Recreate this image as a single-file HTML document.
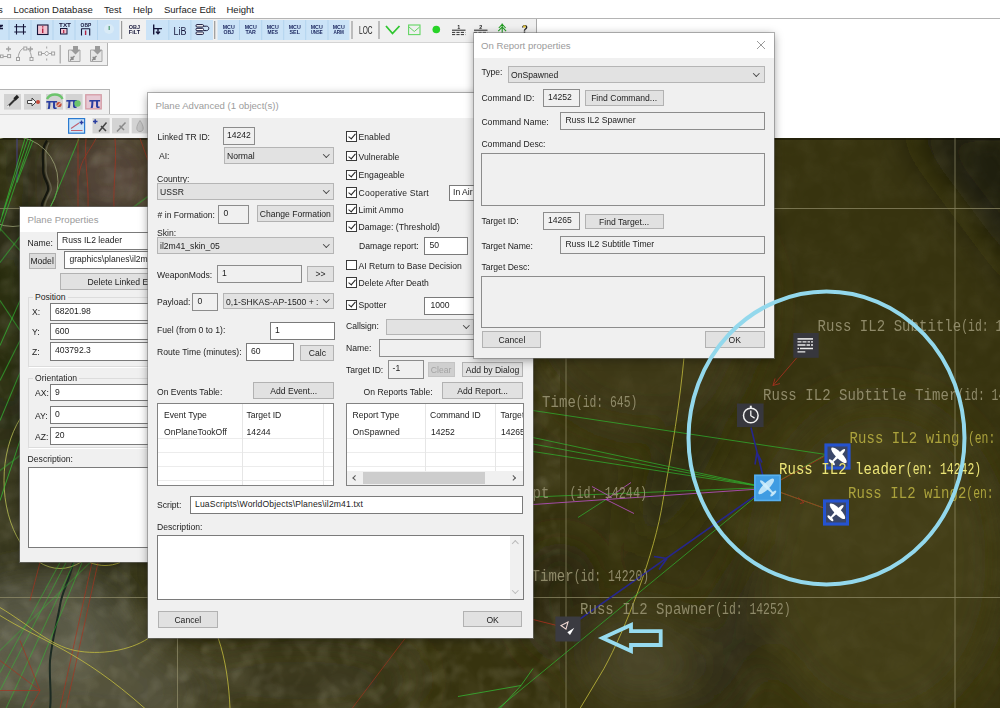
<!DOCTYPE html>
<html><head><meta charset="utf-8"><title>Mission Editor</title>
<style>
*{box-sizing:border-box;margin:0;padding:0}
html,body{width:1000px;height:708px;overflow:hidden;background:#fff}
body{position:relative;font-family:"Liberation Sans",sans-serif;font-size:8.6px;color:#1c1c1c}
div,span,i{position:absolute}
#menu span{top:3.7px;font-size:9.5px;white-space:nowrap;color:#222;line-height:12px}
.tb{background:#f0f0f0}
.bb{background:#cce4f7;top:19.5px;height:21px;width:22px;border-left:1px solid #b9d7ee}
.gb{background:#d3d3d3;width:17px;height:16px}
.dlg{background:#f0f0f0;box-shadow:0 0 0 1px rgba(120,120,120,.55),0 2px 9px rgba(0,0,0,.4)}
.dlg .title{left:0;top:0;right:0;height:25px;background:#fff;color:#9c9c9c;font-size:9.6px;line-height:25px;padding-left:7.5px;white-space:nowrap}
.l{white-space:nowrap;line-height:13px;height:13px}
.in{background:#fff;border:1px solid #7a7a7a;white-space:nowrap;overflow:hidden}
.ro{background:#f0f0f0;border:1px solid #8c8c8c;white-space:nowrap;overflow:hidden}
.btn{background:#e1e1e1;border:1px solid #b2b2b2;text-align:center;white-space:nowrap;overflow:hidden}
.btn.dis{background:#cfcfcf;border-color:#c4c4c4;color:#a3a3a3}
.sel{background:#e2e2e2;border:1px solid #b5b5b5;padding-left:2px;white-space:nowrap;overflow:hidden}
.sel i{right:5px;top:50%;margin-top:-4px;width:4.6px;height:4.6px;border-right:1px solid #444;border-bottom:1px solid #444;transform:rotate(45deg)}
.cb{width:10.6px;height:10.6px;background:#fff;border:1px solid #3a3a3a}
.cb.on:after{content:"";position:absolute;left:2.6px;top:-0.2px;width:3px;height:6.2px;border-right:1.1px solid #222;border-bottom:1.1px solid #222;transform:rotate(40deg)}
.tbl{background:#fff;border:1px solid #828282;overflow:hidden}
.tbl .l{color:#222}
.hl{left:0;right:0;height:1px;background:#ececec}
.vl{top:0;bottom:0;width:1px;background:#e6e6e6}
</style></head><body>
<div id="map" style="left:0;top:137.5px;width:1000px;height:570.5px;background:#3c3718;overflow:hidden"><svg width="1000" height="570.5" viewBox="0 137.5 1000 570.5" style="position:absolute;left:0;top:0"><defs>
<filter id="bl" x="-20%" y="-20%" width="140%" height="140%"><feGaussianBlur stdDeviation="22"/></filter>
<filter id="bs" x="-20%" y="-20%" width="140%" height="140%"><feGaussianBlur stdDeviation="9"/></filter>
<filter id="nz" x="0" y="0" width="100%" height="100%"><feTurbulence type="fractalNoise" baseFrequency="0.035" numOctaves="3" seed="7"/><feColorMatrix values="0 0 0 0 0.1  0 0 0 0 0.09  0 0 0 0 0.03  0.55 0.55 0 0 -0.5"/></filter>
<filter id="nz2" x="0" y="0" width="100%" height="100%"><feTurbulence type="fractalNoise" baseFrequency="0.02" numOctaves="2" seed="3"/><feColorMatrix values="0 0 0 0 0.55  0 0 0 0 0.52  0 0 0 0 0.38  0.7 0.7 0 0 -0.62"/></filter>
<filter id="nz3" x="0" y="0" width="100%" height="100%"><feTurbulence type="fractalNoise" baseFrequency="0.06" numOctaves="2" seed="11"/><feColorMatrix values="0 0 0 0 0.62  0 0 0 0 0.6  0 0 0 0 0.46  0.8 0.8 0 0 -0.72"/></filter>
</defs>
<rect x="0" y="137" width="1000" height="571" fill="#37330f"/>
<g filter="url(#bl)">
<rect x="-40" y="120" width="190" height="620" fill="#36361f"/>
<ellipse cx="112" cy="175" rx="55" ry="45" fill="#54453a"/>
<ellipse cx="40" cy="650" rx="95" ry="65" fill="#5c5b48"/>
<ellipse cx="130" cy="690" rx="90" ry="45" fill="#55533c"/>
<ellipse cx="10" cy="330" rx="30" ry="120" fill="#232611"/>
<ellipse cx="18" cy="172" rx="38" ry="45" fill="#25280f"/>
<path d="M905 120L1040 120L1040 300Z" fill="#1c1a0a"/>
<ellipse cx="690" cy="440" rx="26" ry="110" transform="rotate(25 690 440)" fill="#2c2910"/>
<ellipse cx="740" cy="630" rx="30" ry="110" transform="rotate(25 740 630)" fill="#2f2b12"/>
<ellipse cx="640" cy="660" rx="55" ry="45" fill="#4a4428"/>
<ellipse cx="880" cy="560" rx="120" ry="160" fill="#423d15"/>
<ellipse cx="560" cy="600" rx="40" ry="60" fill="#2b2811"/>
<ellipse cx="640" cy="300" rx="120" ry="130" fill="#3d3813"/>
<ellipse cx="300" cy="680" rx="120" ry="40" fill="#3a371c"/>
</g>
<rect x="0" y="137" width="1000" height="571" filter="url(#nz)" opacity=".6"/>
<rect x="0" y="137" width="1000" height="571" filter="url(#nz2)" opacity=".07"/>
<rect x="0" y="137" width="560" height="571" filter="url(#nz2)" opacity=".18"/>
<rect x="0" y="137" width="1000" height="571" filter="url(#nz3)" opacity=".05"/>
<rect x="0" y="137" width="560" height="571" filter="url(#nz3)" opacity=".25"/>
<rect x="0" y="137" width="1000" height="2.5" fill="#000" opacity=".35"/>
<g stroke="#96926e" stroke-width=".9" opacity=".75"><path d="M177.5 137V708M566 137V708M955 137V708M0 208H1000M0 597H1000"/></g>
<g fill="none" stroke-width=".9">
<path d="M47 140 C40 150 44 160 43 168 C42 178 50 183 48 190 C45 198 40 203 42 210" stroke="#15170f" stroke-width="2.2"/>
<path d="M49 142 C43 152 47 160 46 168 C45 178 53 183 51 190 C48 198 43 203 45 210" stroke="#77755f" stroke-width="1.4" opacity=".6"/>
<path d="M73 562 C70 580 62 590 60 605 C57 622 52 640 50 660 C49 680 52 695 50 708" stroke="#1c2a22" stroke-width="2"/>
<circle cx="13" cy="181" r="45" stroke="#a5ab7d" stroke-width=".9" opacity=".8"/>
<ellipse cx="60" cy="480" rx="56" ry="88" stroke="#b9bf55" stroke-width="1" opacity=".8"/>
<path d="M17 138V182" stroke="#4a47b0" opacity=".8"/>
<g stroke="#34c236" opacity=".85"><path d="M25 138L2 215M28 138L0 222M31 138L-2 236M33 140L17 182M79 138L50 208M148 196L126 212M0 228L20 250M0 262L20 236M0 300L20 330M0 345L20 300M0 380L20 340M0 420L20 372M0 470L20 455M0 500L20 440"/>
<path d="M60 562L0 672M66 562L0 690M74 562L6 708M82 562L22 708M90 562L0 650" opacity=".75"/></g>
<g stroke="#a8321f" opacity=".75"><path d="M78 138V208M86 138C84 160 89 180 88 208M96 138C90 150 80 160 79 175M115 138C117 160 113 185 114 208M140 138L148 160"/>
<path d="M92 562L60 708M98 562L66 708M40 562L30 600M20 640L40 690L0 660M0 690L40 690M30 708L40 690"/></g>
<g stroke="#c9c23f" opacity=".85"><path d="M0 607C30 625 50 645 75 650C100 655 130 650 148 638M0 615C40 640 80 650 145 708M218 637C226 660 229 685 230 708M90 562C100 566 110 566 120 562"/>
<path d="M684 357C680 400 672 450 663 500C655 553 625 630 604 668L580 708"/></g>
<path d="M405 638L352 708" stroke="#a8321f" opacity=".7"/><path d="M458 696L521 685L533 668M521 685L500 708" stroke="#34c236" opacity=".8"/>
</g>
<g fill="none" stroke-width=".85">
<path d="M533 410L826 454M533 437L767 487M533 443.5L767 487M533 451L767 487M533 496.5L767 487M767 487L828 509M767 487L826 454M767 487L498 708M578 517L606 499" stroke="#2fbf32" opacity=".78"/>
<path d="M533 504L767 488M606 499L631 482M606 499L634 513M592 486L612 497" stroke="#b64fc0"/>
<path d="M797 357L773 385M773 385L775 378M773 385L780 383M767 487L828 509M798 497L804 502M800 503L804 502M533 619L557 625M767 487L826 455" stroke="#a6301f"/>
<path d="M751 427L766 488M757 452L755 464M757 452L762 462M575 622L767 487M667 558L654 556M667 558L659 569" stroke="#26268c" stroke-width="1.6"/>
</g>
<rect x="793.3" y="332" width="25.40000000000009" height="25.30000000000001" fill="#37373d"/>
<g stroke="#ececec" stroke-width="1.3"><path d="M797.5 338.4H813" stroke-width="1.6"/><path d="M797.5 341.3H801.5M802.5 341.3H806.5M807.5 341.3H810M811 341.3H813M797.5 344.5H805.5M806.5 344.5H810M811 344.5H813M797.5 348H799M800 348H813M797.5 351.4H805.3"/></g>
<rect x="737" y="403" width="26.600000000000023" height="23.600000000000023" fill="#37373d"/>
<g fill="none" stroke="#f2f2f2" stroke-width="1.5"><circle cx="750.8" cy="415" r="7.3"/><path d="M750.8 410V415.2L754.6 417.6" stroke-width="1.3"/><path d="M750.8 407.6V405.2" stroke-width="2"/></g>
<rect x="754" y="474" width="27" height="26.8" fill="#3f9ce2"/><rect x="755" y="475" width="25" height="24.8" fill="none" stroke="#58b0ee" stroke-width="1.4"/>
<g transform="translate(767.5,487.2) rotate(-45)" fill="#d4f0fb" fill-opacity="0.85"><ellipse cx="0" cy="-1.8" rx="10.6" ry="3.2"/><path d="M0 -10.2C1.6 -10.2 1.9 -5 1.5 0L0.7 8.5H-0.7L-1.5 0C-1.9 -5 -1.6 -10.2 0 -10.2Z"/><ellipse cx="0" cy="8.2" rx="3.9" ry="1.4"/></g>
<rect x="824.5" y="443" width="26" height="26" fill="#3a4668"/><rect x="826.0" y="444.5" width="23" height="23" fill="none" stroke="#2553cf" stroke-width="3"/>
<g transform="translate(837.7,456) rotate(45)" fill="#fff" fill-opacity="1"><ellipse cx="0" cy="-1.8" rx="10.6" ry="3.2"/><path d="M0 -10.2C1.6 -10.2 1.9 -5 1.5 0L0.7 8.5H-0.7L-1.5 0C-1.9 -5 -1.6 -10.2 0 -10.2Z"/><ellipse cx="0" cy="8.2" rx="3.9" ry="1.4"/></g>
<rect x="823" y="499" width="26" height="26" fill="#3a4668"/><rect x="824.5" y="500.5" width="23" height="23" fill="none" stroke="#2553cf" stroke-width="3"/>
<g transform="translate(836.2,512) rotate(45)" fill="#fff" fill-opacity="1"><ellipse cx="0" cy="-1.8" rx="10.6" ry="3.2"/><path d="M0 -10.2C1.6 -10.2 1.9 -5 1.5 0L0.7 8.5H-0.7L-1.5 0C-1.9 -5 -1.6 -10.2 0 -10.2Z"/><ellipse cx="0" cy="8.2" rx="3.9" ry="1.4"/></g>
<rect x="555.4" y="616" width="25.200000000000045" height="25" fill="#3b3b41"/>
<path d="M568 621.6L561 625L566 628.6Z" fill="none" stroke="#f0d8d2" stroke-width="1.1"/><path d="M574.3 627.2L567.3 631.7L570 634.5Z" fill="#fff"/>
<g font-family="Liberation Mono, monospace" font-size="14px" style="white-space:pre">
<g transform="translate(0,406) scale(1,1.17)" fill="#8f8a69" fill-opacity="1"><text xml:space="preserve" x="542" y="0" textLength="33.8" lengthAdjust="spacing">Time</text><text x="575.8" y="0" textLength="61.6" lengthAdjust="spacingAndGlyphs">(id: 645)</text></g>
<g transform="translate(0,497) scale(1,1.17)" fill="#8f8a69" fill-opacity="1"><text xml:space="preserve" x="524" y="0" textLength="25.3" lengthAdjust="spacing">ypt</text></g>
<g transform="translate(0,497) scale(1,1.17)" fill="#8f8a69" fill-opacity="1"><text x="569.5" y="0" textLength="77.5" lengthAdjust="spacingAndGlyphs">(id: 14244)</text></g>
<g transform="translate(0,580) scale(1,1.17)" fill="#8f8a69" fill-opacity="1"><text xml:space="preserve" x="531.5" y="0" textLength="42.2" lengthAdjust="spacing">Timer</text><text x="573.8" y="0" textLength="75.3" lengthAdjust="spacingAndGlyphs">(id: 14220)</text></g>
<g transform="translate(0,613.6) scale(1,1.17)" fill="#8f8a69" fill-opacity="1"><text xml:space="preserve" x="580" y="0" textLength="135.2" lengthAdjust="spacing">Russ IL2 Spawner</text><text x="715.2" y="0" textLength="75.3" lengthAdjust="spacingAndGlyphs">(id: 14252)</text></g>
<g transform="translate(0,330) scale(1,1.17)" fill="#8f8a69" fill-opacity="1"><text xml:space="preserve" x="817.6" y="0" textLength="143.6" lengthAdjust="spacing">Russ IL2 Subtitle</text><text x="961.2" y="0" textLength="75.3" lengthAdjust="spacingAndGlyphs">(id: 14265)</text></g>
<g transform="translate(0,399.4) scale(1,1.17)" fill="#8f8a69" fill-opacity="1"><text xml:space="preserve" x="763" y="0" textLength="194.3" lengthAdjust="spacing">Russ IL2 Subtitle Timer</text><text x="957.4" y="0" textLength="75.3" lengthAdjust="spacingAndGlyphs">(id: 14265)</text></g>
<g transform="translate(0,442.6) scale(1,1.17)" fill="#aba23c" fill-opacity="1"><text xml:space="preserve" x="849.6" y="0" textLength="118.3" lengthAdjust="spacing">Russ IL2 wing </text><text x="967.9" y="0" textLength="75.3" lengthAdjust="spacingAndGlyphs">(en: 14250)</text></g>
<g transform="translate(0,473) scale(1,1.17)" fill="#ebe476" fill-opacity="1"><text xml:space="preserve" x="779" y="0" textLength="126.7" lengthAdjust="spacing">Russ IL2 leader</text><text x="905.8" y="0" textLength="75.3" lengthAdjust="spacingAndGlyphs">(en: 14242)</text></g>
<g transform="translate(0,497) scale(1,1.17)" fill="#aba23c" fill-opacity="1"><text xml:space="preserve" x="848" y="0" textLength="118.3" lengthAdjust="spacing">Russ IL2 wing2</text><text x="966.3" y="0" textLength="75.3" lengthAdjust="spacingAndGlyphs">(en: 14258)</text></g>
</g></svg></div>
<div id="menu" style="left:0;top:0;width:1000px;height:19px;background:#fff;border-bottom:1px solid #b4b4b4">
<span style="left:-2px">s</span><span style="left:13.5px">Location Database</span><span style="left:104px">Test</span><span style="left:133px">Help</span><span style="left:164px">Surface Edit</span><span style="left:226.5px">Height</span>
</div>
<div style="left:0;top:19px;width:1000px;height:118.5px;background:#fff"></div>
<div class="tb" style="left:0;top:19px;width:537px;height:23.5px;border-right:1px solid #a8a8a8;border-bottom:1px solid #d4d4d4"></div>
<div class="tb" style="left:0;top:42.5px;width:108px;height:23px;border-right:1px solid #b4b4b4;border-bottom:1px solid #b4b4b4"></div>
<div class="tb" style="left:0;top:89px;width:110px;height:25px;border-top:1px solid #b4b4b4;border-right:1px solid #b4b4b4"></div>
<div class="tb" style="left:0;top:114px;width:160px;height:23.5px;background:#f3f3f3;border-top:1px solid #d4d4d4"></div>
<svg width="1000" height="140" viewBox="0 0 1000 140" style="position:absolute;left:0;top:0" font-family="Liberation Sans, sans-serif">
<rect x="0" y="20" width="119.5" height="20" fill="#cbe3f7"/><rect x="8.5" y="20" width="1" height="20" fill="#b4d4ee"/><rect x="30.5" y="20" width="1" height="20" fill="#b4d4ee"/><rect x="52.5" y="20" width="1" height="20" fill="#b4d4ee"/><rect x="74.5" y="20" width="1" height="20" fill="#b4d4ee"/><rect x="97.0" y="20" width="1" height="20" fill="#b4d4ee"/>
<rect x="146" y="20" width="67" height="20" fill="#cbe3f7"/><rect x="168.3" y="20" width="1" height="20" fill="#b4d4ee"/><rect x="190.4" y="20" width="1" height="20" fill="#b4d4ee"/>
<rect x="217.5" y="20" width="132.0" height="20" fill="#cbe3f7"/><rect x="239.0" y="20" width="1" height="20" fill="#b4d4ee"/><rect x="261.2" y="20" width="1" height="20" fill="#b4d4ee"/><rect x="283.2" y="20" width="1" height="20" fill="#b4d4ee"/><rect x="305.2" y="20" width="1" height="20" fill="#b4d4ee"/><rect x="327.5" y="20" width="1" height="20" fill="#b4d4ee"/>
<rect x="121.0" y="21" width="1.2" height="18" fill="#9a9a9a"/>
<rect x="214.1" y="21" width="1.2" height="18" fill="#9a9a9a"/>
<rect x="351.4" y="21" width="1.2" height="18" fill="#9a9a9a"/>
<rect x="378.4" y="21" width="1.2" height="18" fill="#9a9a9a"/>
<path d="M0 25.5H3M0 28.5H3M0 27L3 25.5" stroke="#16163a" stroke-width="1.3" fill="none"/>
<path d="M16.5 24V34.5M23.5 24V34.5M14.3 26.7H26M14.3 32H26" stroke="#16163a" stroke-width="1.1" fill="none"/>
<rect x="37.5" y="25" width="10.5" height="9.5" fill="#f1c4d2" stroke="#16163a" stroke-width="1.1"/><path d="M42.7 28.5V33M42.7 26.2V27.4" stroke="#b02040" stroke-width="1.4"/>
<text x="59" y="26.6" font-size="4.6" font-weight="bold" fill="#16163a" textLength="12" lengthAdjust="spacingAndGlyphs">TXT</text>
<rect x="60.5" y="28.5" width="6.5" height="5.5" fill="#f1c4d2" stroke="#16163a" stroke-width="1"/><path d="M63.7 30V33" stroke="#b02040" stroke-width="1.2"/>
<text x="80.6" y="26.6" font-size="4.6" font-weight="bold" fill="#16163a" textLength="10.6" lengthAdjust="spacingAndGlyphs">OBP</text>
<path d="M81.5 28.5V35.5M89.7 28.5V35.5M81.5 28.8H89.7" stroke="#16163a" stroke-width="1.1" fill="none"/><path d="M85.6 30.5V35" stroke="#b02040" stroke-width="1.4"/>
<circle cx="109" cy="29" r="5" fill="#dcecf6" opacity=".8"/><path d="M109.2 26V30" stroke="#4a9a6a" stroke-width="1.2"/>
<text x="128.8" y="29" font-size="5.2" font-weight="bold" fill="#16163a" textLength="11.2" lengthAdjust="spacingAndGlyphs">OBJ</text>
<text x="128.8" y="34.3" font-size="5.2" font-weight="bold" fill="#16163a" textLength="11.2" lengthAdjust="spacingAndGlyphs">FiLT</text>
<path d="M153.7 24.5V34.5M153.7 28.6H162M158 28.6V33.6M156 31.6L158 33.8L160 31.6" stroke="#16163a" stroke-width="1.4" fill="none"/>
<text x="173.6" y="34.6" font-size="11.6" fill="#16163a" textLength="13" lengthAdjust="spacingAndGlyphs" style="font-stretch:condensed">LiB</text>
<g fill="#fff" stroke="#16163a" stroke-width="1"><rect x="196" y="24.6" width="7.5" height="2.4" rx="1"/><rect x="196" y="28.3" width="7.5" height="2.4" rx="1"/><rect x="196" y="32" width="7.5" height="2.4" rx="1"/><path d="M203.5 26.2H206.5C209.5 26.2 209.5 30.6 206.5 30.6H203.5" fill="none"/></g>
<text x="228.7" y="28.8" font-size="5" font-weight="bold" fill="#1f2b63" text-anchor="middle" textLength="12" lengthAdjust="spacingAndGlyphs">MCU</text>
<text x="228.7" y="34.3" font-size="5" font-weight="bold" fill="#1f2b63" text-anchor="middle" textLength="10.5" lengthAdjust="spacingAndGlyphs">OBJ</text>
<text x="250.7" y="28.8" font-size="5" font-weight="bold" fill="#1f2b63" text-anchor="middle" textLength="12" lengthAdjust="spacingAndGlyphs">MCU</text>
<text x="250.7" y="34.3" font-size="5" font-weight="bold" fill="#1f2b63" text-anchor="middle" textLength="10.5" lengthAdjust="spacingAndGlyphs">TAR</text>
<text x="272.7" y="28.8" font-size="5" font-weight="bold" fill="#1f2b63" text-anchor="middle" textLength="12" lengthAdjust="spacingAndGlyphs">MCU</text>
<text x="272.7" y="34.3" font-size="5" font-weight="bold" fill="#1f2b63" text-anchor="middle" textLength="10.5" lengthAdjust="spacingAndGlyphs">MES</text>
<text x="294.7" y="28.8" font-size="5" font-weight="bold" fill="#1f2b63" text-anchor="middle" textLength="12" lengthAdjust="spacingAndGlyphs">MCU</text>
<text x="294.7" y="34.3" font-size="5" font-weight="bold" fill="#1f2b63" text-anchor="middle" textLength="10.5" lengthAdjust="spacingAndGlyphs">SEL</text>
<text x="316.7" y="28.8" font-size="5" font-weight="bold" fill="#1f2b63" text-anchor="middle" textLength="12" lengthAdjust="spacingAndGlyphs">MCU</text>
<text x="316.7" y="34.3" font-size="5" font-weight="bold" fill="#1f2b63" text-anchor="middle" textLength="12" lengthAdjust="spacingAndGlyphs">UNSE</text>
<text x="338.7" y="28.8" font-size="5" font-weight="bold" fill="#1f2b63" text-anchor="middle" textLength="12" lengthAdjust="spacingAndGlyphs">MCU</text>
<text x="338.7" y="34.3" font-size="5" font-weight="bold" fill="#1f2b63" text-anchor="middle" textLength="10.5" lengthAdjust="spacingAndGlyphs">ARM</text>
<text x="359" y="34" font-size="10.5" fill="#222" textLength="13.5" lengthAdjust="spacingAndGlyphs">LOC</text>
<path d="M386 26L392.5 33.5L399.5 26" stroke="#2fc62f" stroke-width="1.8" fill="none"/>
<rect x="408.6" y="25" width="11.4" height="9.6" fill="none" stroke="#63d563" stroke-width="1.1"/><path d="M409 27L414.3 31.5L419.6 27" fill="none" stroke="#63d563" stroke-width="1"/>
<circle cx="436.3" cy="29.5" r="3.8" fill="#27d327"/>
<text x="458.7" y="28.6" font-size="5.4" font-weight="bold" fill="#222" text-anchor="middle">1</text>
<path d="M452 30.2H465.5" stroke="#222" stroke-width="1"/><path d="M452 32.4H465.5M452 34.6H465.5" stroke="#333" stroke-width="1" stroke-dasharray="3.2 1.2"/>
<text x="480.7" y="28.6" font-size="5.4" font-weight="bold" fill="#222" text-anchor="middle">2</text>
<path d="M474 30.2H487.5" stroke="#222" stroke-width="1"/><path d="M474 32.4H487.5M474 34.6H487.5" stroke="#333" stroke-width="1" stroke-dasharray="3.2 1.2"/>
<path d="M502.2 23.5V34M498.8 28L502.2 24.2L505.6 28M498.3 31.2L502.2 27L506.1 31.2" stroke="#1f9a1f" stroke-width="1.1" fill="none"/>
<text x="521.6" y="33.4" font-size="10.5" font-weight="bold" fill="#222">?</text><circle cx="524.5" cy="26.5" r="1.3" fill="#e8c83a"/>
<g fill="#f4f4f4" stroke="#a2a2a2" stroke-width="1"><path d="M3 56.5H8" fill="none"/><rect x="0.5" y="55" width="2.6" height="2.6"/><rect x="7.6" y="54.6" width="3" height="3"/><path d="M8.5 46.5V51.5M6 49H11" fill="none" stroke-width="1.3"/><path d="M18 58C19 50 23 47.5 25 48.5M26.5 48.5C29 49 31 52 31.5 58" fill="none"/><rect x="16.5" y="57.5" width="3" height="3"/><rect x="23.8" y="47" width="3" height="3"/><rect x="30" y="57.5" width="3" height="3"/><path d="M30.5 46.5V51.5M28 49H33" fill="none" stroke-width="1.3"/><path d="M41.5 53.5H52" fill="none"/><rect x="38.5" y="52" width="3" height="3"/><rect x="51.6" y="52" width="3" height="3"/><path d="M46.7 51L49 53.5L46.7 56L44.4 53.5Z"/><path d="M46.7 46.5V48.5M46.7 58.5V60.5" fill="none"/></g>
<rect x="59.6" y="45" width="1.2" height="18.5" fill="#a8a8a8"/>
<g><path d="M68.5 50H80.0V61.5H68.5Z" fill="#e6e6e6" stroke="#a8a8a8" stroke-width="1"/><path d="M73.0 46H78.0V50H80.0L75.5 54.5L71.0 50H73.0Z" fill="#9a9a9a"/><path d="M70.0 60.5L74.5 56M70.5 57.5H73.0V60" stroke="#8c8c8c" stroke-width="1.3" fill="none"/></g>
<g><path d="M90.5 50H102.0V61.5H90.5Z" fill="#e6e6e6" stroke="#a8a8a8" stroke-width="1"/><path d="M95.0 46H100.0V50H102.0L97.5 54.5L93.0 50H95.0Z" fill="#9a9a9a"/><path d="M92.0 60.5L96.5 56M92.5 57.5H95.0V60" stroke="#8c8c8c" stroke-width="1.3" fill="none"/></g>
<rect x="4" y="94" width="17" height="15.6" fill="#d3d3d3"/>
<rect x="24" y="94" width="17" height="15.6" fill="#d3d3d3"/>
<rect x="46" y="94" width="17" height="15.6" fill="#d3d3d3"/>
<rect x="65.6" y="94" width="17" height="15.6" fill="#d3d3d3"/>
<rect x="85" y="94" width="17" height="15.6" fill="#d3d3d3"/>
<path d="M8 106.5L15 99.5" stroke="#333" stroke-width="2"/><path d="M14.5 99.5L18 96" stroke="#222" stroke-width="3.2"/><path d="M7.6 107.2L9 105.5" stroke="#eee" stroke-width="1.6"/>
<path d="M27.5 100.5H32V98L36 102L32 106V103.5H27.5Z" fill="#f8f8f8" stroke="#333" stroke-width=".9"/><circle cx="38" cy="102" r="2" fill="#c44a3a"/>
<path d="M47 99C50 93 60 93 62.5 99" stroke="#6cc46c" stroke-width="2.4" fill="none"/>
<text x="46" y="108.6" font-size="15" font-weight="bold" fill="#2a3ea0" font-family="Liberation Sans, sans-serif">π</text>
<circle cx="59" cy="104.5" r="2.6" fill="#c4503c"/><path d="M57 106.5L61 102.5" stroke="#eee" stroke-width="1"/>
<text x="66" y="108" font-size="15" font-weight="bold" fill="#2a3ea0" font-family="Liberation Sans, sans-serif">π</text>
<circle cx="77.5" cy="103.5" r="3.2" fill="#6cc46c"/>
<rect x="85.8" y="94.8" width="15.4" height="14" fill="#e6c9d4" stroke="#d89aa4" stroke-width="1.2"/>
<text x="89" y="108" font-size="15" font-weight="bold" fill="#2a3ea0" font-family="Liberation Sans, sans-serif">π</text>
<rect x="68.6" y="118.6" width="16" height="14.6" fill="#cce4f7" stroke="#2a7ad0" stroke-width="1.2"/>
<path d="M71 130.5H82.5M71 128.5L79 123" stroke="#c06070" stroke-width="1.1" fill="none"/><path d="M79.5 122.5H83.5M81.5 120.5V124.5" stroke="#2a3ea0" stroke-width="1.4"/>
<rect x="92.5" y="118" width="17.2" height="15.4" fill="#d3d3d3"/>
<rect x="112" y="118" width="17.2" height="15.4" fill="#d3d3d3"/>
<rect x="131.7" y="118" width="17.2" height="15.4" fill="#d3d3d3"/>
<path d="M93 121.5H97.5M95.2 119.2V123.8" stroke="#2a3ea0" stroke-width="1.5"/><path d="M99 131.5L106.5 122.5M101 126L106 131" stroke="#444" stroke-width="1.5" fill="none"/>
<path d="M117 131.5L125.5 122.5M119.5 125.5L124 130" stroke="#8a8a8a" stroke-width="1.5" fill="none"/>
<path d="M140 120.5C136 126 135.5 131.5 140 131.5C144.5 131.5 144 126 140 120.5Z" fill="#c2c2c2" stroke="#aaa" stroke-width="1"/>
</svg>
<div class="dlg" style="left:20px;top:207px;width:150px;height:355px"><div style="left:0;top:0;width:150px;height:355px;overflow:hidden"><div class="title">Plane Properties</div><div style="left:-20px;top:-207px;width:1000px;height:708px"><div class="l" style="left:27.6px;top:237.1px;">Name:</div>
<div class="in" style="left:57.0px;top:232.0px;width:103.0px;height:18.4px;line-height:15.4px;padding-left:4px;">Russ IL2 leader</div>
<div class="btn" style="left:28.6px;top:252.6px;width:27.0px;height:16.0px;line-height:15.6px;background:#dcdcdc;">Model</div>
<div class="in" style="left:64.4px;top:251.0px;width:95.6px;height:18.4px;line-height:15.4px;padding-left:4px;">graphics\planes\il2m41.txt</div>
<div class="btn" style="left:59.6px;top:273.4px;width:140.4px;height:17.0px;line-height:16.6px;text-align:left;padding-left:27px;">Delete Linked Entity</div>
<div style="left:28px;top:296.5px;width:140px;height:70px;border:1px solid #dcdcdc;box-shadow:1px 1px 0 #fff"></div>
<div style="left:28px;top:377.5px;width:140px;height:70px;border:1px solid #dcdcdc;box-shadow:1px 1px 0 #fff"></div>
<div class="l" style="left:33.0px;top:290.7px;background:#f0f0f0;padding:0 2px;">Position</div>
<div class="l" style="left:33.0px;top:371.7px;background:#f0f0f0;padding:0 2px;">Orientation</div>
<div class="l" style="left:32.0px;top:305.7px;">X:</div>
<div class="in" style="left:50.0px;top:302.6px;width:110.0px;height:18.0px;line-height:15.0px;padding-left:4px;">68201.98</div>
<div class="l" style="left:32.0px;top:325.7px;">Y:</div>
<div class="in" style="left:50.0px;top:323.0px;width:110.0px;height:17.4px;line-height:14.4px;padding-left:4px;">600</div>
<div class="l" style="left:32.0px;top:345.7px;">Z:</div>
<div class="in" style="left:50.0px;top:342.4px;width:110.0px;height:18.2px;line-height:15.2px;padding-left:4px;">403792.3</div>
<div class="l" style="left:35.0px;top:387.1px;">AX:</div>
<div class="in" style="left:50.0px;top:383.6px;width:110.0px;height:17.8px;line-height:14.8px;padding-left:4px;">9</div>
<div class="l" style="left:35.0px;top:410.1px;">AY:</div>
<div class="in" style="left:50.0px;top:406.4px;width:110.0px;height:18.0px;line-height:15.0px;padding-left:4px;">0</div>
<div class="l" style="left:35.0px;top:431.1px;">AZ:</div>
<div class="in" style="left:50.0px;top:427.4px;width:110.0px;height:18.0px;line-height:15.0px;padding-left:4px;">20</div>
<div class="l" style="left:27.6px;top:453.1px;">Description:</div>
<div class="in" style="left:28.0px;top:467.4px;width:132.0px;height:80.6px;line-height:77.6px;padding-left:4px;"></div></div></div></div>
<div class="dlg" style="left:148px;top:92.5px;width:384.5px;height:545.0px"><div style="left:0;top:0;width:384.5px;height:545.0px;overflow:hidden"><div class="title">Plane Advanced (1 object(s))</div><div style="left:-148px;top:-92.5px;width:1000px;height:708px"><div class="l" style="left:157.6px;top:130.7px;">Linked TR ID:</div>
<div class="ro" style="left:223.0px;top:127.0px;width:32.0px;height:18.4px;line-height:15.4px;padding-left:3px;">14242</div>
<div class="l" style="left:159.0px;top:150.1px;">AI:</div>
<div class="sel" style="left:224.0px;top:147.4px;width:110.4px;height:17.0px;line-height:17.2px">Normal<i></i></div>
<div class="l" style="left:157.0px;top:172.7px;">Country:</div>
<div class="sel" style="left:157.0px;top:183.4px;width:177.4px;height:17.0px;line-height:17.2px">USSR<i></i></div>
<div class="l" style="left:157.6px;top:209.1px;"># in Formation:</div>
<div class="ro" style="left:218.4px;top:205.4px;width:31.0px;height:18.2px;line-height:15.2px;padding-left:4px;">0</div>
<div class="btn" style="left:257.0px;top:205.4px;width:76.6px;height:17.0px;line-height:16.6px;">Change Formation</div>
<div class="l" style="left:157.0px;top:227.1px;">Skin:</div>
<div class="sel" style="left:157.0px;top:237.4px;width:177.4px;height:16.6px;line-height:16.8px">il2m41_skin_05<i></i></div>
<div class="l" style="left:157.0px;top:268.5px;">WeaponMods:</div>
<div class="ro" style="left:217.0px;top:265.4px;width:85.4px;height:18.0px;line-height:15.0px;padding-left:4px;">1</div>
<div class="btn" style="left:307.0px;top:266.0px;width:27.0px;height:15.6px;line-height:15.2px;">&gt;&gt;</div>
<div class="l" style="left:157.0px;top:296.1px;">Payload:</div>
<div class="ro" style="left:192.4px;top:292.6px;width:25.6px;height:18.0px;line-height:15.0px;padding-left:4px;">0</div>
<div class="sel" style="left:223.0px;top:292.6px;width:111.4px;height:16.4px;line-height:16.6px">0,1-SHKAS-AP-1500 + :<i></i></div>
<div class="l" style="left:157.0px;top:324.1px;">Fuel (from 0 to 1):</div>
<div class="in" style="left:270.0px;top:322.0px;width:65.0px;height:18.0px;line-height:15.0px;padding-left:4px;">1</div>
<div class="l" style="left:157.0px;top:345.5px;">Route Time (minutes):</div>
<div class="in" style="left:246.0px;top:343.2px;width:48.4px;height:18.2px;line-height:15.2px;padding-left:4px;">60</div>
<div class="btn" style="left:300.4px;top:344.6px;width:34.0px;height:16.0px;line-height:15.6px;">Calc</div>
<div class="l" style="left:157.0px;top:385.7px;">On Events Table:</div>
<div class="btn" style="left:253.0px;top:382.4px;width:81.4px;height:17.0px;line-height:16.6px;">Add Event...</div>
<div class="tbl" style="left:157px;top:403px;width:177.4px;height:82.6px"><div class="hl" style="top:34.4px"></div><div class="hl" style="top:48px"></div><div class="hl" style="top:62px"></div><div class="hl" style="top:76px"></div><div class="vl" style="left:83.6px"></div><div class="vl" style="left:164.6px"></div><div class="l" style="left:6px;top:5px">Event Type</div><div class="l" style="left:88.4px;top:5px">Target ID</div><div class="l" style="left:6px;top:22px">OnPlaneTookOff</div><div class="l" style="left:88.6px;top:22px">14244</div></div>
<div class="cb on" style="left:346.0px;top:131.1px"></div><div class="l" style="left:358.6px;top:130.7px;">Enabled</div>
<div class="cb on" style="left:346.0px;top:150.9px"></div><div class="l" style="left:358.6px;top:150.5px;">Vulnerable</div>
<div class="cb on" style="left:346.0px;top:169.5px"></div><div class="l" style="left:358.6px;top:169.1px;">Engageable</div>
<div class="cb on" style="left:346.0px;top:187.1px"></div><div class="l" style="left:358.6px;top:186.7px;letter-spacing:.2px;">Cooperative Start</div>
<div class="in" style="left:449.0px;top:184.6px;width:51.0px;height:16.4px;line-height:13.4px;padding-left:3px;">In Air</div>
<div class="cb on" style="left:346.0px;top:203.9px"></div><div class="l" style="left:358.6px;top:203.5px;">Limit Ammo</div>
<div class="cb on" style="left:346.0px;top:221.1px"></div><div class="l" style="left:358.6px;top:220.7px;">Damage: (Threshold)</div>
<div class="l" style="left:359.0px;top:239.5px;">Damage report:</div>
<div class="in" style="left:424.4px;top:237.4px;width:43.2px;height:18.0px;line-height:15.0px;padding-left:4px;">50</div>
<div class="cb" style="left:346.0px;top:259.9px"></div><div class="l" style="left:358.6px;top:259.5px;">AI Return to Base Decision</div>
<div class="cb on" style="left:346.0px;top:277.1px"></div><div class="l" style="left:358.6px;top:276.7px;">Delete After Death</div>
<div class="cb on" style="left:346.0px;top:299.5px"></div><div class="l" style="left:358.6px;top:299.1px;">Spotter</div>
<div class="in" style="left:424.4px;top:296.6px;width:75.6px;height:18.0px;line-height:15.0px;padding-left:5px;">1000</div>
<div class="l" style="left:346.0px;top:320.1px;">Callsign:</div>
<div class="sel" style="left:386.0px;top:318.6px;width:88.4px;height:16.8px;line-height:17.0px"><i></i></div>
<div class="l" style="left:346.0px;top:341.5px;">Name:</div>
<div class="ro" style="left:379.0px;top:339.4px;width:144.0px;height:18.0px;line-height:15.0px;padding-left:4px;"></div>
<div class="l" style="left:346.0px;top:363.5px;">Target ID:</div>
<div class="ro" style="left:387.6px;top:360.4px;width:36.4px;height:18.2px;line-height:15.2px;padding-left:4px;">-1</div>
<div class="btn dis" style="left:427.6px;top:361.6px;width:27.0px;height:15.8px;line-height:15.4px;">Clear</div>
<div class="btn" style="left:462.0px;top:361.6px;width:61.0px;height:15.8px;line-height:15.4px;">Add by Dialog</div>
<div class="l" style="left:363.6px;top:385.7px;">On Reports Table:</div>
<div class="btn" style="left:442.4px;top:382.4px;width:80.6px;height:17.0px;line-height:16.6px;">Add Report...</div>
<div class="tbl" style="left:346.4px;top:403px;width:177.2px;height:82.6px"><div class="hl" style="top:34.4px"></div><div class="hl" style="top:48px"></div><div class="hl" style="top:62px"></div><div class="vl" style="left:77.6px;bottom:14px"></div><div class="vl" style="left:148px;bottom:14px"></div><div class="l" style="left:5.2px;top:5px">Report Type</div><div class="l" style="left:82.6px;top:5px">Command ID</div><div class="l" style="left:153px;top:5px">Target ID</div><div class="l" style="left:5.2px;top:22px">OnSpawned</div><div class="l" style="left:83.6px;top:22px">14252</div><div class="l" style="left:153.6px;top:22px">14265</div><div style="left:0;right:0;bottom:0;height:13.6px;background:#f0f0f0"></div><div style="left:15.2px;width:122px;bottom:0.6px;height:12.4px;background:#cdcdcd"></div><i style="left:5.6px;bottom:4.4px;width:4.4px;height:4.4px;border-left:1.4px solid #555;border-bottom:1.4px solid #555;transform:rotate(45deg)"></i><i style="right:7px;bottom:4.4px;width:4.4px;height:4.4px;border-right:1.4px solid #555;border-top:1.4px solid #555;transform:rotate(45deg)"></i></div>
<div class="l" style="left:157.0px;top:499.1px;">Script:</div>
<div class="in" style="left:190.0px;top:496.4px;width:333.0px;height:18.0px;line-height:15.0px;padding-left:4px;letter-spacing:.14px;">LuaScripts\WorldObjects\Planes\il2m41.txt</div>
<div class="l" style="left:157.0px;top:520.5px;">Description:</div>
<div class="in" style="left:157.0px;top:535.4px;width:366.6px;height:65.0px;line-height:62.0px;padding-left:4px;"></div>
<div style="left:509.6px;top:536.4px;width:13px;height:63px;background:#f0f0f0"></div>
<i style="left:513.4px;top:541.4px;width:4.6px;height:4.6px;border-left:1.2px solid #bbb;border-top:1.2px solid #bbb;transform:rotate(45deg)"></i>
<i style="left:513.4px;top:588.4px;width:4.6px;height:4.6px;border-right:1.2px solid #bbb;border-bottom:1.2px solid #bbb;transform:rotate(45deg)"></i>
<div class="btn" style="left:158.0px;top:611.0px;width:59.6px;height:16.6px;line-height:16.2px;">Cancel</div>
<div class="btn" style="left:463.2px;top:611.0px;width:58.8px;height:16.4px;line-height:16.0px;">OK</div></div></div></div>
<div class="dlg" style="left:473.5px;top:32.5px;width:300.5px;height:325.0px"><div style="left:0;top:0;width:300.5px;height:325.0px;overflow:hidden"><div class="title">On Report properties</div><div style="left:-473.5px;top:-32.5px;width:1000px;height:708px"><div class="l" style="left:481.4px;top:66.1px;">Type:</div>
<div class="sel" style="left:508.0px;top:66.0px;width:257.0px;height:17.4px;line-height:17.6px">OnSpawned<i></i></div>
<div class="l" style="left:481.4px;top:91.5px;">Command ID:</div>
<div class="ro" style="left:543.0px;top:89.0px;width:36.6px;height:18.4px;line-height:15.4px;padding-left:4px;">14252</div>
<div class="btn" style="left:584.6px;top:90.4px;width:79.0px;height:16.0px;line-height:15.6px;">Find Command...</div>
<div class="l" style="left:481.4px;top:116.1px;">Command Name:</div>
<div class="ro" style="left:560.4px;top:112.0px;width:204.6px;height:18.4px;line-height:15.4px;padding-left:4px;">Russ IL2 Spawner</div>
<div class="l" style="left:481.4px;top:137.5px;">Command Desc:</div>
<div class="ro" style="left:481.4px;top:153.4px;width:283.6px;height:52.2px;line-height:49.2px;padding-left:4px;"></div>
<div class="l" style="left:481.4px;top:214.5px;">Target ID:</div>
<div class="ro" style="left:543.0px;top:212.4px;width:36.6px;height:18.0px;line-height:15.0px;padding-left:4px;">14265</div>
<div class="btn" style="left:584.6px;top:213.6px;width:79.0px;height:15.8px;line-height:15.4px;">Find Target...</div>
<div class="l" style="left:481.4px;top:239.7px;">Target Name:</div>
<div class="ro" style="left:560.4px;top:236.0px;width:204.6px;height:18.4px;line-height:15.4px;padding-left:4px;">Russ IL2 Subtitle Timer</div>
<div class="l" style="left:481.4px;top:261.1px;">Target Desc:</div>
<div class="ro" style="left:481.4px;top:276.2px;width:283.6px;height:52.2px;line-height:49.2px;padding-left:4px;"></div>
<div class="btn" style="left:482.4px;top:331.0px;width:59.1px;height:16.5px;line-height:16.1px;">Cancel</div>
<div class="btn" style="left:705.0px;top:331.0px;width:59.6px;height:16.5px;line-height:16.1px;">OK</div>
<svg style="position:absolute;left:756px;top:40px" width="10" height="10" viewBox="0 0 10 10"><path d="M1 1 L9 9 M9 1 L1 9" stroke="#9a9a9a" stroke-width="1" fill="none"/></svg></div></div></div>
<svg width="1000" height="708" viewBox="0 0 1000 708" style="position:absolute;left:0;top:0;pointer-events:none"><ellipse cx="826.5" cy="438" rx="138" ry="146.5" fill="none" stroke="#93d8ec" stroke-width="4"/><path d="M602.5 638L631 625V631.2H660.7V645H631V651Z" fill="none" stroke="#97dbef" stroke-width="3.8" stroke-linejoin="miter"/></svg>
</body></html>
